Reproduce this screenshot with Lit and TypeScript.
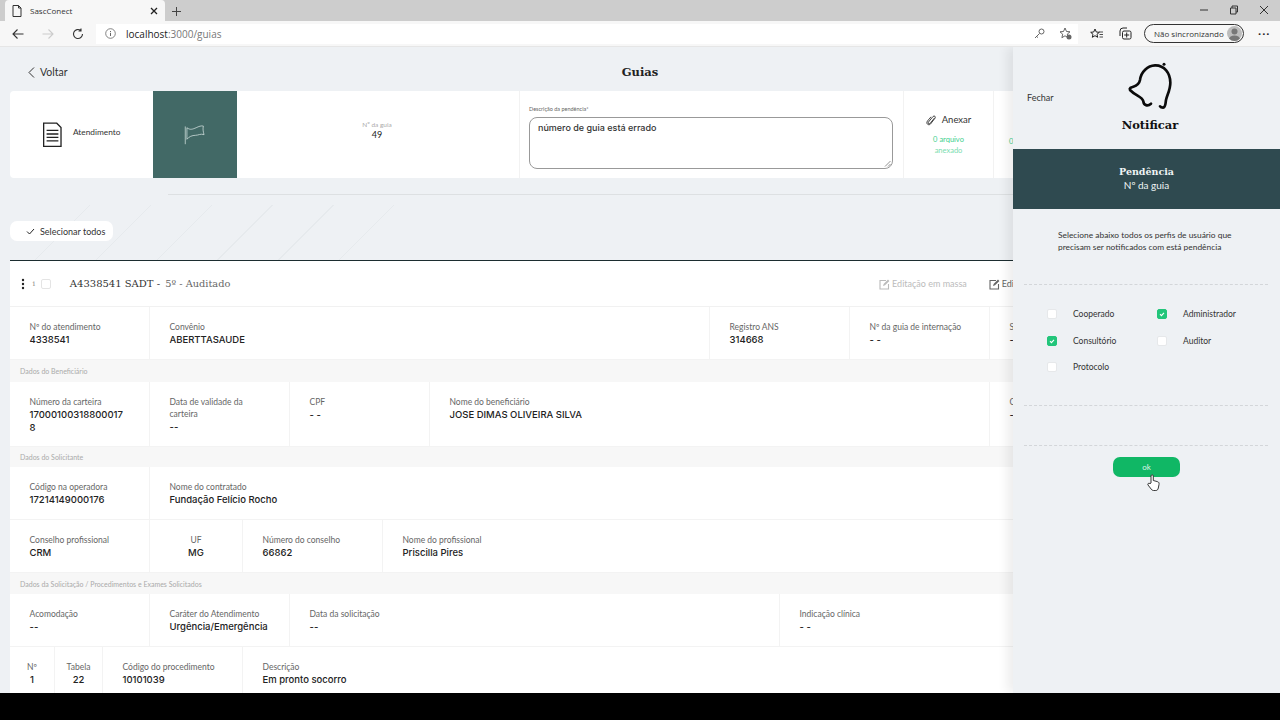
import {css, html, LitElement, svg, type TemplateResult} from 'lit';
import {customElement} from 'lit/decorators.js';

interface Cell {
    w: number | string;
    label: string;
    value: string;
    center?: boolean;
}

type Row = {section: string; h: number} | {cells: Cell[]; h: number};

const ROWS: Row[] = [
    {h: 53, cells: [
        {w: 140, label: 'Nº do atendimento', value: '4338541'},
        {w: 560, label: 'Convênio', value: 'ABERTTASAUDE'},
        {w: 140, label: 'Registro ANS', value: '314668'},
        {w: 140, label: 'Nº da guia de internação', value: '- -'},
        {w: 140, label: 'Senha', value: '- -'},
    ]},
    {section: 'Dados do Beneficiário', h: 22},
    {h: 65, cells: [
        {w: 140, label: 'Número da carteira', value: '17000100318800017\u200b8'},
        {w: 140, label: 'Data de validade da carteira', value: '--'},
        {w: 140, label: 'CPF', value: '- -'},
        {w: 560, label: 'Nome do beneficiário', value: 'JOSE DIMAS OLIVEIRA SILVA'},
        {w: 140, label: 'CNS', value: '- -'},
    ]},
    {section: 'Dados do Solicitante', h: 20},
    {h: 53, cells: [
        {w: 140, label: 'Código na operadora', value: '17214149000176'},
        {w: 840, label: 'Nome do contratado', value: 'Fundação Felício Rocho'},
    ]},
    {h: 53, cells: [
        {w: 140, label: 'Conselho profissional', value: 'CRM'},
        {w: 93, label: 'UF', value: 'MG', center: true},
        {w: 140, label: 'Número do conselho', value: '66862'},
        {w: 600, label: 'Nome do profissional', value: 'Priscilla Pires'},
    ]},
    {section: 'Dados da Solicitação / Procedimentos e Exames Solicitados', h: 21},
    {h: 53, cells: [
        {w: 140, label: 'Acomodação', value: '--'},
        {w: 140, label: 'Caráter do Atendimento', value: 'Urgência/Emergência'},
        {w: 490, label: 'Data da solicitação', value: '--'},
        {w: 220, label: 'Indicação clínica', value: '- -'},
    ]},
    {h: 46, cells: [
        {w: 45, label: 'Nº', value: '1', center: true},
        {w: 48, label: 'Tabela', value: '22', center: true},
        {w: 140, label: 'Código do procedimento', value: '10101039'},
        {w: 600, label: 'Descrição', value: 'Em pronto socorro'},
    ]},
];

const PROFILES = [
    {name: 'Cooperado', on: false},
    {name: 'Administrador', on: true},
    {name: 'Consultório', on: true},
    {name: 'Auditor', on: false},
    {name: 'Protocolo', on: false},
];

const editIcon = svg`<path d="M8 2.500H2v8.500h8.500V6" fill="none" stroke="currentColor" stroke-width="1.100"/><path d="M5 8l.6-2L10 1.500l1.400 1.400L7 7.300z" fill="currentColor"/>`;

@customElement('app-root')
export class AppRoot extends LitElement {

    static styles = css`
        :host {
            display: flex;
            flex-direction: column;
            width: 1280px;
            height: 720px;
            overflow: hidden;
            background: #000;
            font-family: Lato, "Noto Sans", sans-serif;
            color: #222;
        }
        svg {
            display: block;
            flex: none;
        }
        .tabs {
            height: 21px;
            background: #cdcdcd;
            display: flex;
            align-items: flex-end;
            padding-left: 5px;
        }
        .tab {
            width: 160px;
            height: 21px;
            background: #f7f7f7;
            border-radius: 4px 4px 0 0;
            display: flex;
            align-items: center;
            padding: 0 7px;
            gap: 8px;
            box-sizing: border-box;
            font: 8px "Open Sans", sans-serif;
            color: #333;
        }
        .tab span {
            flex: 1;
        }
        .plus {
            margin: 0 0 4px 6px;
        }
        .winctl {
            margin-left: auto;
            display: flex;
            align-items: center;
            height: 19px;
            gap: 20px;
            padding: 0 11px 2px 0;
            align-self: flex-start;
        }
        .toolbar {
            height: 26px;
            background: #f7f7f7;
            display: flex;
            align-items: center;
            padding-left: 12px;
            box-sizing: border-box;
            border-bottom: 1px solid #e6e6e6;
        }
        .nav {
            display: flex;
            gap: 18px;
            align-items: center;
        }
        .address {
            margin-left: 12px;
            width: 982px;
            height: 20px;
            background: #fff;
            display: flex;
            align-items: center;
            padding: 0 6px 0 9px;
            box-sizing: border-box;
            font: 10px "Open Sans", sans-serif;
            color: #777;
            gap: 9px;
        }
        .address b {
            font-weight: 400;
            color: #222;
        }
        .address span:first-of-type {
            margin-left: 1px;
        }
        .address .grow {
            flex: 1;
        }
        .tools {
            display: flex;
            align-items: center;
            margin-left: 12px;
            gap: 16px;
        }
        .sync {
            width: 100px;
            height: 19px;
            margin-left: -4px;
            border: 1px solid #333;
            border-radius: 10px;
            box-sizing: border-box;
            display: flex;
            align-items: center;
            justify-content: space-between;
            padding: 0 1px 0 9px;
            font: 8px "Open Sans", sans-serif;
            color: #333;
            white-space: nowrap;
        }
        .avatar {
            width: 15px;
            height: 15px;
            background: #bdbdbd;
            border-radius: 50%;
            overflow: hidden;
        }
        .dots {
            margin-left: -2px;
            font: 700 11px "Open Sans", sans-serif;
            letter-spacing: 1px;
            line-height: 8px;
        }
        .page {
            position: relative;
            height: 646px;
            background: #eef1f4;
            overflow: hidden;
            padding-left: 10px;
        }
        .top {
            height: 44px;
            display: grid;
            grid-template-columns: 1fr auto 1fr;
            align-items: center;
            padding: 6px 10px 0 0;
            box-sizing: border-box;
        }
        .back {
            display: flex;
            align-items: center;
            gap: 5px;
            padding-left: 18px;
            font-size: 10.5px;
            color: #333;
        }
        .title {
            font: 700 11.500px "DejaVu Serif", serif;
            color: #222;
        }
        .head-card {
            width: 1260px;
            height: 87px;
            background: #fff;
            border-radius: 4px;
            display: flex;
            overflow: hidden;
        }
        .head-card > div {
            flex: none;
            box-sizing: border-box;
        }
        .hc-atend {
            width: 143px;
            display: flex;
            align-items: center;
            gap: 11px;
            padding: 0 0 0 33px;
            font-size: 8.300px;
            color: #333;
        }
        .hc-atend span {
            margin-bottom: 5px;
        }
        .hc-flag {
            width: 84px;
            background: #426966;
            display: flex;
            align-items: center;
            justify-content: center;
            padding-right: 3px;
        }
        .hc-guia {
            width: 283px;
            display: flex;
            flex-direction: column;
            align-items: center;
            justify-content: center;
            font-size: 9px;
            padding: 0 2px 9px 0;
            border-right: 1px solid #f2f2f2;
        }
        .hc-guia small {
            font-size: 6.500px;
            color: #aaa;
            margin-bottom: 1px;
        }
        .hc-desc {
            width: 384px;
            padding: 15px 10px 0 9px;
            border-right: 1px solid #f2f2f2;
        }
        .hc-desc label {
            display: block;
            font-size: 5.500px;
            color: #666;
            margin-bottom: 5px;
        }
        .textarea {
            height: 52px;
            width: 364px;
            border: 1px solid #999;
            border-radius: 8px;
            box-sizing: border-box;
            padding: 4px 8px;
            font: 500 9px Inter, sans-serif;
            color: #333;
            position: relative;
        }
        .grip {
            position: absolute;
            right: 1px;
            bottom: 1px;
        }
        .hc-attach {
            width: 90px;
            display: flex;
            flex-direction: column;
            align-items: center;
            padding-top: 23px;
            color: #3ecf8e;
            font-size: 7.500px;
            line-height: 10.500px;
            border-right: 1px solid #f2f2f2;
        }
        .attach-btn {
            display: flex;
            align-items: center;
            gap: 6px;
            font-size: 9.500px;
            color: #333;
            margin-bottom: 9px;
            line-height: 12px;
        }
        .hc-more {
            width: 90px;
            padding: 46px 0 0 15px;
            color: #3ecf8e;
            font-size: 7.500px;
        }
        .rule {
            height: 1px;
            background: #dde0e2;
            margin: 16px 0 0 158px;
        }
        .select-row {
            position: relative;
            height: 65px;
            padding-top: 26px;
            box-sizing: border-box;
        }
        .select-row::before {
            content: '';
            position: absolute;
            left: 20px;
            top: 10px;
            width: 370px;
            bottom: 0;
            background: repeating-linear-gradient(135deg, transparent 0 42px, #e6eaed 42px 43px);
        }
        .pill {
            position: relative;
            width: 103px;
            height: 20px;
            background: #fff;
            border-radius: 7px;
            display: flex;
            align-items: center;
            gap: 5px;
            padding-left: 16px;
            box-sizing: border-box;
            font-size: 9px;
            color: #333;
        }
        .list {
            width: 1260px;
            background: #fff;
            border-top: 1px solid #1c2d30;
        }
        .list-head {
            height: 46px;
            display: flex;
            align-items: center;
            box-sizing: border-box;
            border-bottom: 1px solid #f1f1f1;
            padding-left: 11px;
        }
        .kebab {
            width: 4px;
        }
        .num {
            font: 6px "DejaVu Serif", serif;
            color: #777;
            margin-left: 7px;
        }
        .cb-head {
            width: 10px;
            height: 10px;
            border: 1px solid #e4e4e4;
            border-radius: 2px;
            margin-left: 5px;
            box-sizing: border-box;
        }
        .guide {
            margin-left: 19px;
            font: 10px "DejaVu Serif", serif;
            color: #333;
            white-space: pre;
        }
        .guide i {
            font-style: normal;
            font-size: 9.800px;
            color: #666;
            margin-left: 2px;
        }
        .actions {
            margin-left: auto;
            display: flex;
            gap: 21px;
            padding-right: 245px;
            font-size: 9px;
            color: #bbb;
        }
        .actions span {
            display: flex;
            align-items: center;
            gap: 2px;
        }
        .actions .dark {
            color: #666;
        }
        .section {
            background: #f7f7f7;
            display: flex;
            align-items: center;
            padding-left: 10px;
            font-size: 7px;
            color: #aaa;
        }
        .row {
            display: flex;
            box-sizing: border-box;
            border-bottom: 1px solid #f3f3f3;
        }
        .row.last {
            border-bottom: none;
        }
        .cell {
            flex: none;
            box-sizing: border-box;
            border-right: 1px solid #f3f3f3;
            padding: 14px 20px 0 19.500px;
            font-size: 8.500px;
            line-height: 12px;
            color: #666;
        }
        .cell:last-child {
            border-right: none;
        }
        .cell.center {
            padding-left: 4px;
            padding-right: 4px;
            text-align: center;
        }
        .cell strong {
            display: block;
            font: 500 9.500px/13px Inter, sans-serif;
            color: #222;
            max-width: 96px;
        }
        .cell:not(:first-child) strong {
            max-width: none;
        }
        .panel {
            position: absolute;
            left: 1013px;
            top: 0;
            bottom: 0;
            width: 267px;
            background: #eef1f4;
            box-shadow: -6px 0 10px rgba(0, 0, 0, 0.07);
        }
        .p-top {
            height: 102px;
            position: relative;
            display: flex;
            flex-direction: column;
            align-items: center;
            padding: 13px 0 0 7px;
            box-sizing: border-box;
        }
        .close {
            position: absolute;
            left: 14px;
            top: 45px;
            font-size: 9px;
            color: #333;
        }
        .p-title {
            font: 700 11.500px "DejaVu Serif", serif;
            color: #111;
            margin-top: 8px;
        }
        .band {
            height: 60px;
            background: #2f4a50;
            color: #eef4f4;
            display: flex;
            flex-direction: column;
            align-items: center;
            justify-content: center;
            font-size: 10px;
            gap: 2px;
            padding-bottom: 2px;
            box-sizing: border-box;
        }
        .band b {
            font: 700 9.500px "DejaVu Serif", serif;
        }
        .intro {
            padding: 20px 0 0 45px;
            font-size: 8.400px;
            line-height: 12px;
            color: #333;
            height: 75px;
            box-sizing: border-box;
        }
        .dash {
            height: 0;
            margin: 0 12px 0 11px;
            border-top: 1px dashed #d3d6d9;
        }
        .checks {
            display: grid;
            grid-template-columns: 110px 110px;
            grid-auto-rows: 26.500px;
            align-items: center;
            padding: 16px 0 0 34px;
            height: 120px;
            box-sizing: border-box;
        }
        .check {
            display: flex;
            align-items: center;
            gap: 16px;
            font-size: 8.500px;
            color: #333;
        }
        .box {
            width: 10px;
            height: 10px;
            flex: none;
            background: #fff;
            border: 1px solid #e6e8ea;
            border-radius: 2px;
            box-sizing: border-box;
        }
        .box.on {
            background: #22c57a;
            border-color: #22c57a;
        }
        .gap {
            height: 39px;
        }
        .ok-wrap {
            display: flex;
            justify-content: flex-start;
            padding: 11px 0 0 100px;
        }
        .ok {
            width: 67px;
            height: 20px;
            border-radius: 7px;
            background: #10b765;
            color: #dff5e9;
            font-size: 8px;
            display: flex;
            align-items: center;
            justify-content: center;
        }
        .cursor {
            position: absolute;
            left: 1147px;
            top: 427px;
        }
        .black {
            flex: 1;
            background: #000;
        }
    `;

    private renderCell(c: Cell): TemplateResult {
        return html`<div class="cell ${c.center ? 'center' : ''}" style="width:${c.w}px">${c.label}<strong>${c.value}</strong></div>`;
    }

    private renderRows(): TemplateResult[] {
        return ROWS.map((r, i) => {
            if ('section' in r) {
                return html`<div class="section" style="height:${r.h}px">${r.section}</div>`;
            }
            const cls = i === ROWS.length - 1 ? 'row last' : 'row';
            return html`<div class=${cls} style="height:${r.h}px">${r.cells.map((c) => this.renderCell(c))}</div>`;
        });
    }

    private renderChrome(): TemplateResult {
        return html`
            <div class="tabs">
                <div class="tab">
                    <svg width="10" height="12" viewBox="0 0 10 12"><path d="M1 .5h5.500L9 3v8.500H1zM6.500.5V3H9" fill="none" stroke="#333"/></svg>
                    <span>SascConect</span>
                    <svg width="8" height="8" viewBox="0 0 8 8"><path d="M1 1l6 6M7 1L1 7" stroke="#222" stroke-width="1.300"/></svg>
                </div>
                <svg class="plus" width="11" height="11" viewBox="0 0 11 11"><path d="M5.500 1v9M1 5.500h9" stroke="#444"/></svg>
                <div class="winctl">
                    <svg width="10" height="10" viewBox="0 0 10 10"><path d="M1 5h8" stroke="#333"/></svg>
                    <svg width="10" height="10" viewBox="0 0 10 10"><path d="M1.500 3h5.500v6H1.500zM3 3V1h5.500v6H7" fill="none" stroke="#333"/></svg>
                    <svg width="10" height="10" viewBox="0 0 10 10"><path d="M1 1l8 8M9 1L1 9" stroke="#333"/></svg>
                </div>
            </div>
            <div class="toolbar">
                <div class="nav">
                    <svg width="12" height="12" viewBox="0 0 12 12"><path d="M11.500 6H1M5.500 1.500L1 6l4.500 4.500" fill="none" stroke="#333" stroke-width="1.100"/></svg>
                    <svg width="12" height="12" viewBox="0 0 12 12"><path d="M.5 6H11M6.500 1.500L11 6l-4.500 4.500" fill="none" stroke="#ccc" stroke-width="1.100"/></svg>
                    <svg width="12" height="12" viewBox="0 0 12 12"><path d="M10.500 6A4.500 4.500 0 1 1 8.800 2.500M9 .5v2.500H6.500" fill="none" stroke="#333" stroke-width="1.100"/></svg>
                </div>
                <div class="address">
                    <svg width="11" height="11" viewBox="0 0 11 11"><circle cx="5.500" cy="5.500" r="4.800" fill="none" stroke="#666" stroke-width=".8"/><path d="M5.500 4.800v3.200M5.500 3v1" stroke="#666"/></svg>
                    <span><b>localhost</b>:3000/guias</span>
                    <span class="grow"></span>
                    <svg width="11" height="11" viewBox="0 0 11 11"><circle cx="7.500" cy="3.500" r="2.500" fill="none" stroke="#555" stroke-width=".9"/><path d="M5.500 5.500L1 10M2.500 8.500l1.500 1" stroke="#555" stroke-width=".9" fill="none"/></svg>
                    <svg style="margin-left:5px" width="13" height="13" viewBox="0 0 13 13"><path d="M6 1l1.500 3.500 3.500.3-2.700 2.300.8 3.500L6 8.800l-3.100 1.900.8-3.500L1 4.800l3.500-.3z" fill="none" stroke="#555" stroke-width=".9"/><circle cx="10" cy="10" r="2.500" fill="#666"/></svg>
                </div>
                <div class="tools">
                    <svg width="13" height="12" viewBox="0 0 13 12"><path d="M5 1l1.300 3 3 .3-2.300 2 .7 3L5 7.700 2.300 9.300l.7-3-2.300-2 3-.3z" fill="none" stroke="#222"/><path d="M9 4h4M9.500 6.500H13M9.500 9H13" stroke="#222" stroke-width=".8"/></svg>
                    <svg width="13" height="13" viewBox="0 0 13 13"><path d="M1 9V4a3 3 0 0 1 3-3h4" fill="none" stroke="#222"/><rect x="3.500" y="4" width="8.500" height="8" rx="1.500" fill="none" stroke="#222"/><path d="M7.700 5.500v5M5.200 8h5" stroke="#222"/></svg>
                    <div class="sync">Não sincronizando
                        <div class="avatar"><svg width="15" height="15" viewBox="0 0 15 15"><circle cx="7.500" cy="5.500" r="3" fill="#777"/><ellipse cx="7.500" cy="13" rx="5.500" ry="3.500" fill="#777"/></svg></div>
                    </div>
                    <div class="dots">···</div>
                </div>
            </div>`;
    }

    private renderHeadCard(): TemplateResult {
        return html`
            <div class="head-card">
                <div class="hc-atend">
                    <svg width="19" height="26" viewBox="129 361 58 78"><path d="M131 364h40l13 13v58h-53z" fill="none" stroke="#222" stroke-width="4"/><path d="M140 386h36M140 397h36M140 407h36M140 418h36" stroke="#222" stroke-width="4"/></svg>
                    <span>Atendimento</span>
                </div>
                <div class="hc-flag">
                    <svg width="28" height="25" viewBox="540 365 85 75"><path d="M556 378v54M561 382c10 8 18 4 28 0 8-4 16-7 22-5-2 8-1 16 2 26-10-4-18 2-26 2-10 0-20 4-26 12z" fill="none" stroke="#dbe8e6" stroke-width="2.200"/></svg>
                </div>
                <div class="hc-guia"><small>Nº da guia</small>49</div>
                <div class="hc-desc">
                    <label>Descrição da pendência*</label>
                    <div class="textarea">número de guia está errado
                        <svg class="grip" width="7" height="7" viewBox="0 0 7 7"><path d="M6.500 1L1 6.500M6.500 4L4 6.500" stroke="#777" stroke-width=".8"/></svg>
                    </div>
                </div>
                <div class="hc-attach">
                    <div class="attach-btn">
                        <svg width="10" height="11" viewBox="0 0 10 11"><path d="M8.500 3L4 8.500c-1 1-2.500-.2-1.600-1.400L7 1.500c1.500-1.400 3 .3 2 1.700L4.500 9c-2 2-5-.5-3-3L5 1.800" fill="none" stroke="#333" stroke-width=".9"/></svg>
                        Anexar
                    </div>
                    <span>0 arquivo</span><span style="opacity:.7">anexado</span>
                </div>
                <div class="hc-more">0 arquivo</div>
            </div>`;
    }

    private renderPanel(): TemplateResult {
        return html`
            <aside class="panel">
                <div class="p-top">
                    <span class="close">Fechar</span>
                    <svg width="50" height="50" viewBox="800 180 150 150"><path d="M878 311C868 320 856 316 855 304 852 290 832 288 815 270 812 264 818 262 825 260 838 256 843 250 845 240 848 215 868 197 890 196 918 195 936 220 936 248 936 270 926 285 923 300 921 312 922 322 914 323 910 323 907 322 905 319" fill="none" stroke="#0b0b0b" stroke-width="8" stroke-linecap="round"/><circle cx="917" cy="193" r="4.500" fill="#0b0b0b"/></svg>
                    <div class="p-title">Notificar</div>
                </div>
                <div class="band"><b>Pendência</b><span>Nº da guia</span></div>
                <div class="intro">Selecione abaixo todos os perfis de usuário que<br>precisam ser notificados com está pendência</div>
                <div class="dash"></div>
                <div class="checks">
                    ${PROFILES.map((p) => html`
                        <div class="check">
                            <div class="box ${p.on ? 'on' : ''}">${p.on ? html`<svg width="8" height="8" viewBox="0 0 8 8"><path d="M2 4.200l1.400 1.400L6 2.800" fill="none" stroke="#fff" stroke-width="1.100"/></svg>` : ''}</div>
                            ${p.name}
                        </div>`)}
                </div>
                <div class="dash"></div>
                <div class="gap"></div>
                <div class="dash"></div>
                <div class="ok-wrap"><div class="ok">ok</div></div>
            </aside>
            <svg class="cursor" width="13" height="17" viewBox="0 0 13 17"><path d="M4 9V2c0-1.600 2.300-1.600 2.300 0v4.500l4 1.100c1.500.4 2 1.300 1.700 3L11.300 14c-.3 1.500-1 2.500-2.500 2.500H6.500c-1 0-1.700-.5-2.300-1.400L1 11c-.8-1.300.9-2.500 2-1.300z" fill="#fff" stroke="#222" stroke-width=".9"/></svg>`;
    }

    render(): TemplateResult {
        return html`
            ${this.renderChrome()}
            <main class="page">
                <div class="top">
                    <div class="back">
                        <svg width="7" height="11" viewBox="0 0 7 11"><path d="M6 .5l-5 5 5 5" fill="none" stroke="#333"/></svg>
                        Voltar
                    </div>
                    <div class="title">Guias</div>
                </div>
                ${this.renderHeadCard()}
                <div class="rule"></div>
                <div class="select-row">
                    <div class="pill">
                        <svg width="9" height="7" viewBox="0 0 9 7"><path d="M1 3.500l2.500 2.500L8 1" fill="none" stroke="#222"/></svg>
                        Selecionar todos
                    </div>
                </div>
                <section class="list">
                    <div class="list-head">
                        <svg class="kebab" width="4" height="12" viewBox="0 0 4 12"><circle cx="2" cy="2" r="1.200" fill="#222"/><circle cx="2" cy="6" r="1.200" fill="#222"/><circle cx="2" cy="10" r="1.200" fill="#222"/></svg>
                        <span class="num">1</span>
                        <div class="cb-head"></div>
                        <div class="guide">A4338541 SADT - <i>5º - Auditado</i></div>
                        <div class="actions">
                            <span><svg width="12" height="12" viewBox="0 0 12 12">${editIcon}</svg>Editação em massa</span>
                            <span class="dark"><svg width="12" height="12" viewBox="0 0 12 12">${editIcon}</svg>Editar</span>
                        </div>
                    </div>
                    ${this.renderRows()}
                </section>
                ${this.renderPanel()}
            </main>
            <div class="black"></div>`;
    }
}
